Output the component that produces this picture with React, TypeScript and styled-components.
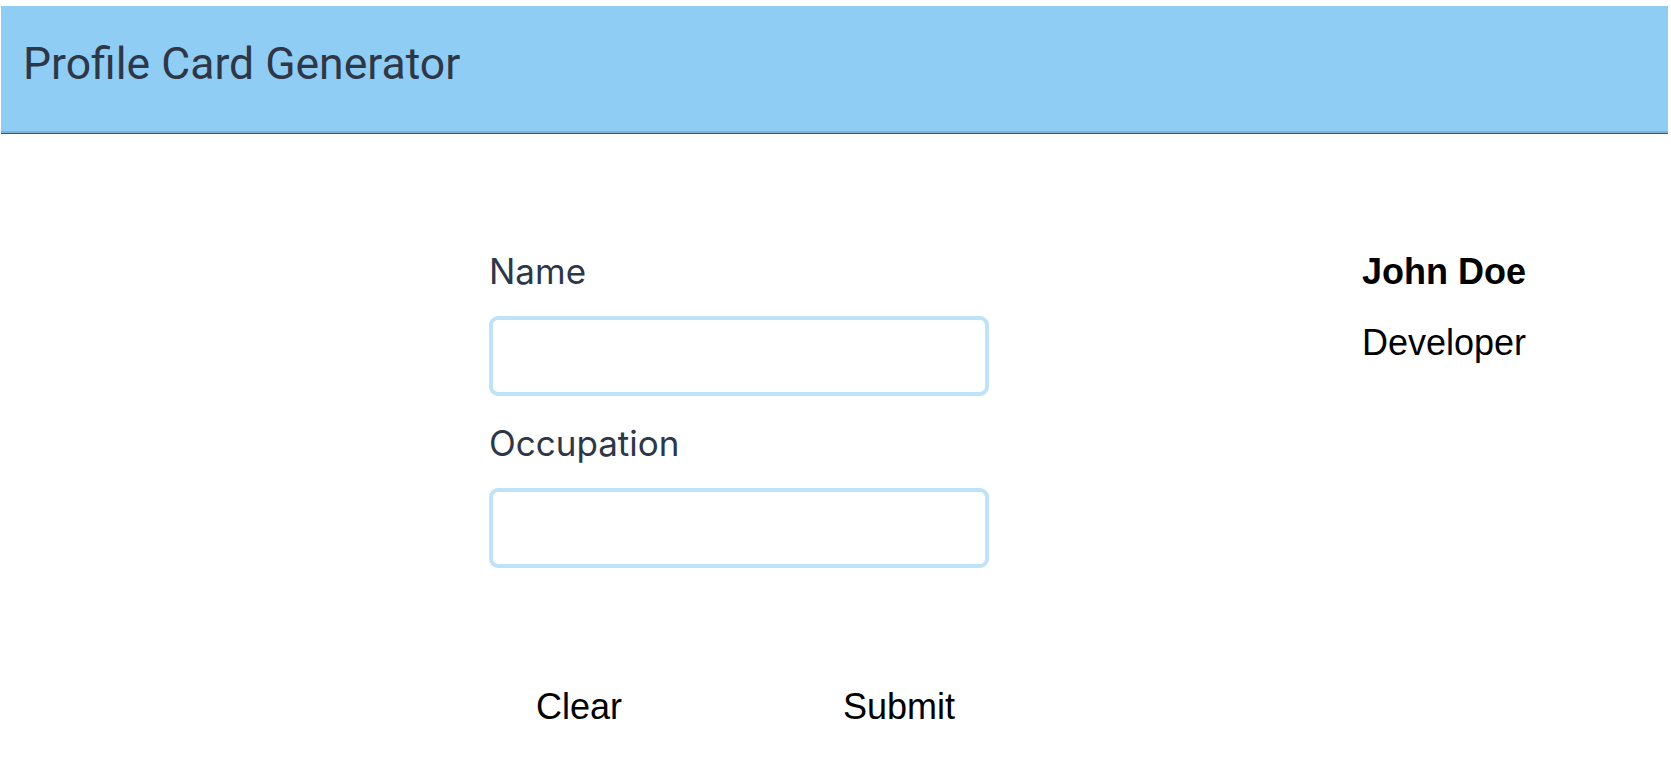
import React, { useState } from "react";
import styled, { createGlobalStyle } from "styled-components";

const GlobalStyle = createGlobalStyle`
  html, body {
    margin: 0;
    padding: 0;
    background: #ffffff;
  }
  * { box-sizing: border-box; }
`;

const Page = styled.div`
  padding: 6px 3px 0 1px;
`;

const Header = styled.header`
  height: 128px;
  display: flex;
  align-items: center;
  padding: 0 0 10px 22px;
  background: #90cdf4;
  border-bottom: 1px solid #4a5568;
  box-shadow: inset 0 -2px 0 #7fb3d6;
`;

const Title = styled.h1`
  margin: 0;
  font-family: Roboto, "Noto Sans", sans-serif;
  font-weight: 400;
  font-size: 44.5px;
  line-height: 1.2;
  color: #2d3748;
`;

const Main = styled.main`
  display: flex;
  align-items: flex-start;
  padding: 116px 0 0 488px;
`;

const Form = styled.form`
  width: 500px;
  display: flex;
  flex-direction: column;
`;

const Label = styled.label`
  font-family: Inter, "Noto Sans", sans-serif;
  font-size: 35px;
  line-height: 42px;
  color: #2d3748;
  margin-bottom: 24px;
`;

const Input = styled.input`
  height: 80px;
  width: 100%;
  border: 4px solid #bee3f8;
  border-radius: 9px;
  background: #ffffff;
  outline: none;
  font-family: Inter, sans-serif;
  font-size: 32px;
  padding: 0 16px;
  margin-bottom: 26px;
`;

const ButtonRow = styled.div`
  display: flex;
  justify-content: space-between;
  margin-top: 83px;
`;

const Button = styled.button`
  width: 180px;
  height: 60px;
  padding: 0;
  border: none;
  background: transparent;
  font-family: "Liberation Sans", Arial, sans-serif;
  font-size: 36px;
  color: #000000;
  cursor: pointer;
`;

const Card = styled.section`
  margin: 2px 0 0 373px;
  display: flex;
  flex-direction: column;
  gap: 31px;
`;

const CardName = styled.div`
  font-family: "Liberation Sans", Arial, sans-serif;
  font-weight: 700;
  font-size: 36px;
  line-height: 40px;
  color: #000000;
`;

const CardJob = styled.div`
  font-family: "Liberation Sans", Arial, sans-serif;
  font-size: 36px;
  line-height: 40px;
  color: #000000;
`;

export default function App() {
  const [name, setName] = useState("");
  const [job, setJob] = useState("");
  return (
    <>
      <GlobalStyle />
      <Page>
        <Header>
          <Title>Profile Card Generator</Title>
        </Header>
        <Main>
          <Form onSubmit={(e) => e.preventDefault()}>
            <Label htmlFor="name">Name</Label>
            <Input id="name" value={name} onChange={(e) => setName(e.target.value)} />
            <Label htmlFor="job">Occupation</Label>
            <Input id="job" value={job} onChange={(e) => setJob(e.target.value)} />
            <ButtonRow>
              <Button type="button" onClick={() => { setName(""); setJob(""); }}>Clear</Button>
              <Button type="submit">Submit</Button>
            </ButtonRow>
          </Form>
          <Card>
            <CardName>{name || "John Doe"}</CardName>
            <CardJob>{job || "Developer"}</CardJob>
          </Card>
        </Main>
      </Page>
    </>
  );
}
